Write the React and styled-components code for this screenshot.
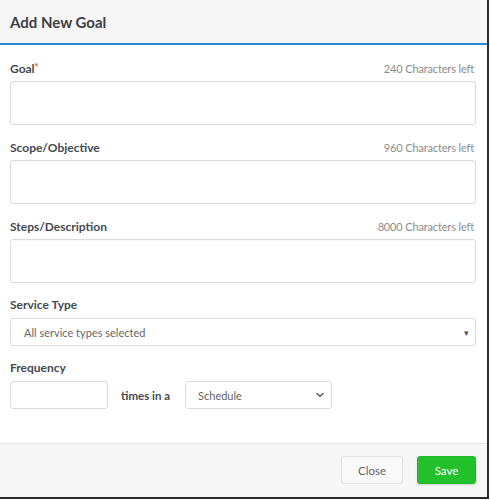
import React from 'react';
import styled, { createGlobalStyle } from 'styled-components';
import { ChevronDown } from 'lucide-react';

const GlobalStyle = createGlobalStyle`
  html, body {
    margin: 0;
    padding: 0;
    background: #fff;
  }
  * {
    box-sizing: border-box;
  }
`;

const Modal = styled.div`
  width: 489px;
  height: 499px;
  display: flex;
  flex-direction: column;
  background: #fff;
  border-right: 2px solid #2b2b2b;
  border-bottom: 2px solid #2b2b2b;
  font-family: Lato, 'Open Sans', sans-serif;
`;

const Header = styled.div`
  height: 45px;
  padding: 0 10px;
  display: flex;
  align-items: center;
  background: #f6f6f6;
  border-bottom: 2px solid #2a86d6;
`;

const Title = styled.h2`
  margin: 0;
  font-size: 15px;
  font-weight: 700;
  color: #3b4045;
  padding-top: 1px;
`;

const Body = styled.div`
  flex: 1;
  padding: 15px 11px 0 10px;
  display: flex;
  flex-direction: column;
`;

const Field = styled.div`
  display: flex;
  flex-direction: column;
  gap: ${p => p.gap || 5}px;
  margin-bottom: ${p => p.mb ?? 14}px;
`;

const LabelRow = styled.div`
  height: 16px;
  display: flex;
  align-items: center;
  justify-content: space-between;
`;

const Label = styled.label`
  font-size: 12px;
  font-weight: 700;
  color: #454a4f;
`;

const Required = styled.span`
  color: #e0403a;
  font-size: 9px;
  vertical-align: top;
`;

const Counter = styled.span`
  font-size: 11px;
  color: #8c8c8c;
  letter-spacing: -0.15px;
  padding-right: 2px;
`;

const TextBox = styled.div`
  height: ${p => p.h || 44}px;
  width: ${p => (p.w ? `${p.w}px` : '100%')};
  border: 1px solid #dcdcdc;
  border-radius: 3px;
  background: #fff;
  box-shadow: inset 0 1px 2px rgba(0, 0, 0, 0.04);
`;

const SelectBox = styled.div`
  height: ${p => p.h || 28}px;
  width: ${p => (p.w ? `${p.w}px` : '100%')};
  border: 1px solid #dcdcdc;
  border-radius: 3px;
  background: #fff;
  display: flex;
  align-items: center;
  justify-content: space-between;
  padding: 0 ${p => p.pr || 6}px 0 ${p => p.pl || 13}px;
  font-size: 11px;
  color: #666;
`;

const Caret = styled.span`
  font-size: 9px;
  color: #555;
`;

const FreqRow = styled.div`
  display: flex;
  align-items: center;
`;

const TimesText = styled.span`
  font-size: 11.5px;
  font-weight: 700;
  color: #454a4f;
  margin: 0 15px 0 13px;
`;

const Footer = styled.div`
  height: 54px;
  background: #f7f7f7;
  border-top: 1px solid #e6e6e6;
  display: flex;
  justify-content: flex-end;
  align-items: flex-start;
  gap: 14px;
  padding: 12px 11px 0 0;
`;

const Button = styled.button`
  height: 28px;
  width: ${p => p.w}px;
  border-radius: 3px;
  font-family: Lato, 'Open Sans', sans-serif;
  font-size: 11.5px;
  border: 1px solid ${p => (p.primary ? '#1fbb27' : '#e4e4e4')};
  background: ${p => (p.primary ? '#22c02a' : '#f9f9f9')};
  color: ${p => (p.primary ? '#fff' : '#666')};
  box-shadow: ${p => (p.primary ? '0 1px 2px rgba(0,0,0,0.15)' : 'none')};
  cursor: pointer;
`;

const textFields = [
  { label: 'Goal', required: true, left: 240 },
  { label: 'Scope/Objective', left: 960 },
  { label: 'Steps/Description', left: 8000 },
];

export default function App() {
  return (
    <>
      <GlobalStyle />
      <Modal>
        <Header>
          <Title>Add New Goal</Title>
        </Header>
        <Body>
          {textFields.map((f, i) => (
            <Field key={f.label} mb={i === 2 ? 13 : 14}>
              <LabelRow>
                <Label>
                  {f.label}
                  {f.required && <Required>*</Required>}
                </Label>
                <Counter>{f.left} Characters left</Counter>
              </LabelRow>
              <TextBox />
            </Field>
          ))}

          <Field gap={6} mb={13}>
            <LabelRow>
              <Label>Service Type</Label>
            </LabelRow>
            <SelectBox>
              All service types selected
              <Caret>▾</Caret>
            </SelectBox>
          </Field>

          <Field gap={6} mb={0}>
            <LabelRow>
              <Label>Frequency</Label>
            </LabelRow>
            <FreqRow>
              <TextBox h={28} w={98} />
              <TimesText>times in a</TimesText>
              <SelectBox w={147} pl={12} pr={5}>
                Schedule
                <ChevronDown size={12} strokeWidth={2.5} color="#555" />
              </SelectBox>
            </FreqRow>
          </Field>
        </Body>
        <Footer>
          <Button w={62}>Close</Button>
          <Button primary w={59}>Save</Button>
        </Footer>
      </Modal>
    </>
  );
}
